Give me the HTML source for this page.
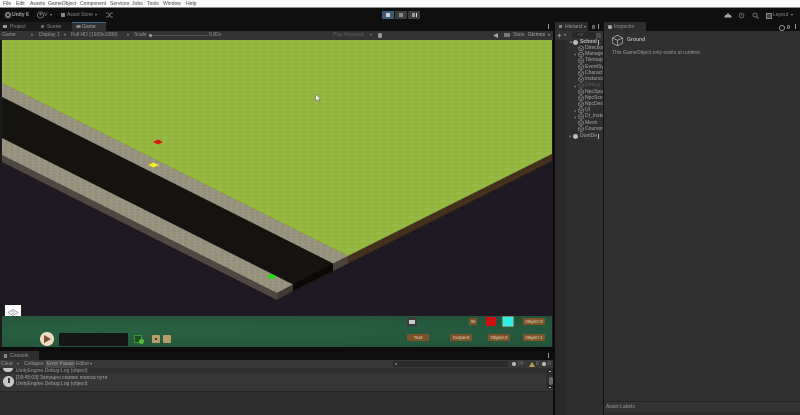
<!DOCTYPE html>
<html><head><meta charset="utf-8">
<style>
html,body{margin:0;padding:0;background:#0f0f0f}
#r{position:relative;width:800px;height:415px;overflow:hidden;background:#0f0f0f;font-family:"Liberation Sans","Noto Sans CJK JP",sans-serif;color:#b4b4b4;font-size:5.05px;line-height:7px;filter:blur(.35px)}
#r div,#r span.t{position:absolute;white-space:nowrap}
.b{position:absolute}
svg{position:absolute;overflow:visible}
.btn{background:#7d5428;color:#e6d8c0;text-align:center;border-radius:1px;font-size:4.6px;line-height:7px}
</style></head><body>
<div id="r">
<!-- menu -->
<div style="left:0;top:0;width:800px;height:8px;background:#fbfbfb"></div>
<div style="left:0;top:7px;width:800px;height:1px;background:#8a8a8a"></div>
<div style="left:3px;top:.5px;color:#444">File</div>
<div style="left:16px;top:.5px;color:#444">Edit</div>
<div style="left:30px;top:.5px;color:#444">Assets</div>
<div style="left:48px;top:.5px;color:#444">GameObject</div>
<div style="left:80px;top:.5px;color:#444">Component</div>
<div style="left:110px;top:.5px;color:#444">Services</div>
<div style="left:132px;top:.5px;color:#444">Jobs</div>
<div style="left:147px;top:.5px;color:#444">Tools</div>
<div style="left:163px;top:.5px;color:#444">Window</div>
<div style="left:186px;top:.5px;color:#444">Help</div>
<!-- toolbar -->
<svg style="left:4px;top:11px" width="8" height="8" viewBox="0 0 8 8"><circle cx="4" cy="4" r="3.2" fill="#777"/><circle cx="4" cy="4" r="1.2" fill="#222"/></svg>
<div style="left:12px;top:11.5px;font-weight:bold;color:#a8a8a8">Unity 6</div>
<svg style="left:37px;top:11px" width="7" height="8" viewBox="0 0 7 8"><circle cx="3.5" cy="4" r="3" fill="none" stroke="#888" stroke-width=".8"/><circle cx="3.5" cy="3.3" r="1" fill="#888"/></svg>
<div style="left:44px;top:11.5px;color:#999">V</div>
<div style="left:50px;top:14px;width:0;height:0;border:1.5px solid transparent;border-top:2px solid #999"></div>
<div style="left:61px;top:13px;width:4px;height:4px;background:#888"></div>
<div style="left:67px;top:11.5px;color:#8c8c8c">Asset Store</div>
<div style="left:95px;top:14px;width:0;height:0;border:1.5px solid transparent;border-top:2px solid #999"></div>
<svg style="left:106px;top:12px" width="7" height="6" viewBox="0 0 7 6"><path d="M0 1h2l3 4h2M0 5h2l3-4h2" stroke="#888" stroke-width=".7" fill="none"/></svg>
<div style="left:382px;top:11px;width:12px;height:8px;background:#3d5a78;border-radius:1px 0 0 1px"></div>
<div style="left:386px;top:13px;width:4px;height:4px;background:#d0d0d0"></div>
<div style="left:395px;top:11px;width:12px;height:8px;background:#3c3c3c"></div>
<div style="left:399px;top:13px;width:4px;height:4px;background:#8a8a8a"></div>
<div style="left:408px;top:11px;width:12px;height:8px;background:#3c3c3c;border-radius:0 1px 1px 0"></div>
<div style="left:412px;top:13px;width:3px;height:4px;background:#9a9a9a"></div>
<div style="left:415.5px;top:13px;width:1px;height:4px;background:#ddd"></div>
<svg style="left:724px;top:12px" width="8" height="6" viewBox="0 0 8 6"><path d="M0 5.5 1.5 3 3 2.5 4 .5 5 2.5 6.5 3 8 5.5z" fill="#aaa"/></svg>
<svg style="left:738px;top:12px" width="7" height="7" viewBox="0 0 7 7"><circle cx="3.5" cy="3.5" r="2.4" fill="none" stroke="#777" stroke-width=".8"/><path d="M3.5 2v1.7l1 .6" stroke="#777" stroke-width=".6" fill="none"/></svg>
<svg style="left:752px;top:12px" width="7" height="7" viewBox="0 0 7 7"><circle cx="3" cy="3" r="2" fill="none" stroke="#888" stroke-width=".8"/><path d="M4.5 4.5 6.5 6.5" stroke="#888" stroke-width=".9"/></svg>
<div style="left:766px;top:12.5px;width:4px;height:4px;border:.7px solid #888;background:#444"></div>
<div style="left:773px;top:11.5px;color:#8c8c8c">Layout</div>
<div style="left:791px;top:14px;width:0;height:0;border:1.5px solid transparent;border-top:2px solid #999"></div>

<!-- tabs -->
<div style="left:0;top:22px;width:72px;height:9px;background:#1c1c1c"></div>
<div style="left:3px;top:25px;width:4px;height:3px;background:#9a9a9a"></div>
<div style="left:10px;top:23.5px;color:#8a8a8a">Project</div>
<div style="left:41px;top:25px;width:3px;height:3px;background:#777;border-radius:50%"></div>
<div style="left:47px;top:23.5px;color:#8a8a8a">Scene</div>
<div style="left:72px;top:22px;width:34px;height:9px;background:#2f3133;border-top:.7px solid #3e6a8c;box-sizing:border-box"></div>
<div style="left:76px;top:25px;width:5px;height:3px;background:#8c8c8c;border-radius:50%"></div>
<div style="left:82px;top:23.5px;color:#a4a4a4">Game</div>
<div style="left:548px;top:24px;width:1px;height:5px;background:#999"></div>
<!-- game toolbar -->
<div style="left:0;top:31px;width:553px;height:9px;background:#333"></div>
<div style="left:2px;top:32px;color:#999">Game</div>
<div style="left:31px;top:34px;border:1.5px solid transparent;border-top:2px solid #999"></div>
<div style="left:39px;top:32px;color:#999">Display 1</div>
<div style="left:64px;top:34px;border:1.5px solid transparent;border-top:2px solid #999"></div>
<div style="left:71px;top:32px;color:#999">Full HD (1920x1080)</div>
<div style="left:127px;top:34px;border:1.5px solid transparent;border-top:2px solid #999"></div>
<div style="left:134px;top:32px;color:#999">Scale</div>
<div style="left:150px;top:35px;width:58px;height:1px;background:#555"></div>
<div style="left:149px;top:33.5px;width:3px;height:3px;border-radius:50%;background:#999"></div>
<div style="left:209px;top:32px;color:#999">0.82x</div>
<div style="left:333px;top:32px;color:#666">Play Focused</div>
<div style="left:370px;top:34px;border:1.5px solid transparent;border-top:2px solid #777"></div>
<div style="left:378px;top:32.5px;width:4px;height:5px;background:#999;border-radius:1.5px"></div>
<svg style="left:494px;top:33px" width="5" height="5" viewBox="0 0 5 5"><path d="M0 1.5h1.5L4 0v5L1.5 3.5H0z" fill="#aaa"/></svg>
<div style="left:504px;top:33px;width:6px;height:4px;background:#777"></div>
<div style="left:513px;top:32px;color:#999">Stats</div>
<div style="left:528px;top:32px;color:#aaa">Gizmos</div>
<div style="left:548px;top:34px;border:1.5px solid transparent;border-top:2px solid #aaa"></div>

<!-- game view -->
<svg style="left:0;top:40px" width="553" height="307" viewBox="0 40 553 307">
<defs>
<pattern id="g" width="8" height="4" patternUnits="userSpaceOnUse"><rect width="8" height="4" fill="#92b53f"/><path d="M0 2 4 0 8 2 4 4z" fill="#98ba42"/><path d="M0 2 4 4M4 4 8 2" stroke="#8cae3b" stroke-width=".4" fill="none"/></pattern>
<pattern id="s" width="6" height="3" patternUnits="userSpaceOnUse"><rect width="6" height="3" fill="#938e79"/><path d="M0 1.5 3 0 6 1.5 3 3z" fill="#9b9682"/></pattern>
</defs>
<rect x="0" y="40" width="553" height="307" fill="#1e1922"/>
<polygon points="2,40 552,40 552,154 348,256 2,83" fill="url(#g)"/>
<polygon points="2,83 348,256 333,263.5 2,97" fill="url(#s)"/>
<polygon points="552,154 348,256 348,263.5 552,161" fill="#43301f"/>
<polygon points="333,263.5 348,256 348,263.5 333,271" fill="#4c443a"/>
<polygon points="2,97 333,263.5 293,284.5 2,138" fill="#15130f"/>
<polygon points="293,284.5 333,263.5 333,271 293,291" fill="#0a0907"/>
<polygon points="2,138 293,284.5 277,293 2,155" fill="url(#s)"/>
<polygon points="2,155 277,293 277,300 2,162" fill="#4f4842"/>
<polygon points="277,293 293,284.5 293,291 277,300" fill="#3f3a34"/>
<polygon points="153,142 158,139.5 163,142 158,144.5" fill="#e01414"/>
<polygon points="148,165 153.5,162.5 159,165 153.5,167.5" fill="#f2ea1a"/>
<polygon points="266,276.5 272,274 277,276.5 272,279" fill="#22e012"/>
<rect x="0" y="40" width="1.5" height="307" fill="#1b1b1b"/>
<path d="M315.5 94 315.5 101 317.2 99.6 318.4 102 319.6 101.4 318.4 99.2 320.4 99z" fill="#fff" stroke="#333" stroke-width=".4"/>
</svg>

<!-- game UI -->
<div style="left:5px;top:305px;width:16px;height:14px;background:#fff"></div>
<svg style="left:8px;top:309px" width="10" height="7" viewBox="0 0 10 7"><path d="M0 3.5 5 .5 10 3.5 5 6.5z" fill="none" stroke="#888" stroke-width=".7"/><circle cx="5" cy="3.5" r="1.2" fill="none" stroke="#888" stroke-width=".5"/></svg>
<div style="left:2px;top:316px;width:550px;height:31px;background:#24573a;background-image:radial-gradient(ellipse at 30% 50%,#2a6141,#22533a)"></div>
<div style="left:40px;top:332px;width:14px;height:14px;border-radius:50%;background:#f0dcc0"></div>
<svg style="left:44px;top:335px" width="7" height="8" viewBox="0 0 7 8"><path d="M0 0 7 4 0 8z" fill="#7a5230"/></svg>
<div style="left:59px;top:333px;width:69px;height:13px;background:#151515;border-radius:1px"></div>
<div style="left:134px;top:335px;width:8px;height:8px;border:1px solid #3a9a2a;box-sizing:border-box;background:#1f4a28"></div>
<div style="left:139px;top:339px;width:5px;height:5px;background:#55c035;border-radius:50%"></div>
<div style="left:152px;top:335px;width:8px;height:8px;background:#b79d6a;border-radius:1px"></div>
<div style="left:155px;top:338px;width:2px;height:2px;background:#433"></div>
<div style="left:163px;top:335px;width:8px;height:8px;background:#b79d6a;border-radius:1px"></div>

<div style="left:407px;top:317px;width:10px;height:9px;background:#3b3b3b"></div>
<div style="left:409px;top:319.5px;width:6px;height:4px;background:#c9c9c9"></div>
<div class="btn" style="left:469px;top:318px;width:8px;height:7px">W</div>
<div style="left:486px;top:317px;width:10px;height:9px;background:#cf1010"></div>
<div style="left:503px;top:317px;width:10px;height:9px;background:#2ff0e8;box-shadow:0 0 0 .5px #d8d0a0"></div>
<div class="btn" style="left:523px;top:317.5px;width:22px;height:7px">Object-3</div>
<div class="btn" style="left:407px;top:333.5px;width:22px;height:7px">Text</div>
<div class="btn" style="left:450px;top:333.5px;width:22px;height:7px">Carpent</div>
<div class="btn" style="left:488px;top:333.5px;width:22px;height:7px">Object-2</div>
<div class="btn" style="left:523px;top:333.5px;width:22px;height:7px">Object-1</div>

<!-- console -->
<div style="left:0;top:347px;width:553px;height:4px;background:#0c0c0c"></div>
<div style="left:0;top:351px;width:553px;height:9px;background:#0f0f0f"></div>
<div style="left:0;top:351px;width:39px;height:9px;background:#2e2e2e"></div>
<div style="left:4px;top:353.5px;width:3px;height:4px;background:#888"></div>
<div style="left:10px;top:352.5px;color:#999">Console</div>
<div style="left:548px;top:353px;width:1px;height:5px;background:#999"></div>
<div style="left:0;top:360px;width:553px;height:8px;background:#383838"></div>
<div style="left:1px;top:360.5px;color:#999">Clear</div>
<div style="left:17px;top:363px;border:1.5px solid transparent;border-top:2px solid #999"></div>
<div style="left:24px;top:360.5px;color:#999">Collapse</div>
<div style="left:45px;top:360px;width:30px;height:8px;background:#4a4a4a"></div>
<div style="left:47px;top:360.5px;color:#aaa">Error Pause</div>
<div style="left:76px;top:360.5px;color:#999">Editor</div>
<div style="left:90px;top:363px;border:1.5px solid transparent;border-top:2px solid #999"></div>
<div style="left:393px;top:361px;width:115px;height:6px;background:#2a2a2a;border-radius:1px"></div>
<div style="left:395px;top:362.5px;width:2px;height:2px;background:#888;border-radius:50%"></div>
<div style="left:512px;top:362px;width:4px;height:4px;background:#bbb;border-radius:50%"></div>
<div style="left:518px;top:360.5px;color:#777">99</div>
<svg style="left:529px;top:361.5px" width="6" height="5" viewBox="0 0 6 5"><path d="M3 0 6 5H0z" fill="#b8a050"/></svg>
<div style="left:536px;top:360.5px;color:#777">8</div>
<div style="left:542px;top:362px;width:4px;height:4px;background:#bbb;border-radius:50%"></div>
<div style="left:548px;top:360.5px;color:#777">0</div>
<div style="left:0;top:368px;width:553px;height:47px;background:#2e2e2e"></div>
<div style="left:0;top:368px;width:553px;height:6px;background:#2f2f2f"></div>
<div style="left:3px;top:368px;width:10px;height:4px;background:#c8c8c8;border-radius:0 0 5px 5px"></div>
<div style="left:16px;top:368px;color:#999;height:6px;overflow:hidden;line-height:6px">UnityEngine.Debug:Log (object)</div>
<div style="left:0;top:374px;width:553px;height:17px;background:#363636"></div>
<div style="left:3px;top:376px;width:11px;height:11px;background:#c8c8c8;border-radius:50%"></div>
<div style="left:8px;top:378px;width:1.5px;height:5px;background:#3a3a3a"></div>
<div style="left:16px;top:374.5px;color:#a4a4a4">[19:45:03] Запущен сервис поиска пути</div>
<div style="left:16px;top:380.5px;color:#a4a4a4">UnityEngine.Debug:Log (object)</div>
<div style="left:0;top:391px;width:553px;height:1px;background:#262626"></div>
<div style="left:546px;top:368px;width:7px;height:21px;background:#2b2b2b"></div>
<div style="left:549px;top:370.5px;width:2px;height:1px;background:#bbb"></div>
<div style="left:548.5px;top:377px;width:4px;height:8px;background:#696969;border-radius:2px"></div>
<div style="left:549px;top:387px;width:2px;height:1px;background:#bbb"></div>
<!-- separators -->
<div style="left:553px;top:22px;width:2px;height:393px;background:#0c0c0c"></div>

<!-- hierarchy -->
<div style="left:555px;top:22px;width:49px;height:9px;background:#0f0f0f"></div>
<div style="left:555px;top:22px;width:33px;height:9px;background:#2d2d2d"></div>
<div style="left:559px;top:25px;width:3px;height:3px;background:#888"></div>
<div style="left:565px;top:23.5px;color:#999;width:20px;overflow:hidden">Hierarcl</div>
<div style="left:584px;top:25.5px;border:1.5px solid transparent;border-top:2px solid #aaa"></div>
<div style="left:592px;top:24.5px;width:3px;height:4px;border:.6px solid #888;border-radius:50%;box-sizing:border-box"></div>
<div style="left:598px;top:24px;width:1px;height:5px;background:#999"></div>
<div style="left:555px;top:31px;width:49px;height:9px;background:#333"></div>
<div style="left:557px;top:31.5px;color:#bbb;font-size:8px">+</div>
<div style="left:564px;top:34px;border:1.5px solid transparent;border-top:2px solid #aaa"></div>
<div style="left:572px;top:32px;width:24px;height:6px;background:#282828;border-radius:2px;color:#666;font-size:4.5px;line-height:6px;text-indent:6px">All</div>
<div style="left:596px;top:32.5px;width:5px;height:5px;background:#4c4c4c"></div>
<div style="left:555px;top:40px;width:12px;height:375px;background:#292929"></div>
<div style="left:567px;top:40px;width:37px;height:375px;background:#2e2e2e"></div>

<svg style="left:555px;top:40px;width:49px;height:100px;overflow:hidden" width="49" height="100" viewBox="555 40 49 100">
<defs><g id="c"><path d="M0 1.5 2.5 0 5 1.5V4L2.5 5.5 0 4zM0 1.5 2.5 3 5 1.5M2.5 3V5.5" fill="none" stroke="#a2a2a2" stroke-width=".5"/></g></defs>
<use href="#c" x="578.5" y="45.7"/><use href="#c" x="578.5" y="51.9"/><use href="#c" x="578.5" y="58.1"/><use href="#c" x="578.5" y="64.3"/><use href="#c" x="578.5" y="70.5"/><use href="#c" x="578.5" y="76.7"/><use href="#c" x="578.5" y="83" opacity=".45"/><use href="#c" x="578.5" y="89.2"/><use href="#c" x="578.5" y="95.4"/><use href="#c" x="578.5" y="101.6"/><use href="#c" x="578.5" y="107.8"/><use href="#c" x="578.5" y="114"/><use href="#c" x="578.5" y="120.2"/><use href="#c" x="578.5" y="126.4"/>
<circle cx="575.5" cy="42.5" r="2.5" fill="#bdbdbd"/><circle cx="575.5" cy="136.5" r="2.5" fill="#bdbdbd"/>
<path d="M569.5 41.5h3l-1.5 2.2zM574.7 53v3l1.5-1.5zM574.7 85v3l1.5-1.5zM574.7 109.5v3l1.5-1.5zM574.7 116v3l1.5-1.5zM569.7 135v3l1.5-1.5z" fill="#888"/>
</svg>
<div style="left:580px;top:38.5px;color:#c0c0c0;font-weight:bold">School</div>
<div style="left:598px;top:40px;width:.8px;height:5px;background:#bbb"></div>
<div style="left:585px;top:45px;color:#a8a8a8;width:19px;overflow:hidden">Direction</div>
<div style="left:585px;top:51.2px;color:#a8a8a8;width:19px;overflow:hidden">Manager</div>
<div style="left:585px;top:57.4px;color:#a8a8a8;width:19px;overflow:hidden">Tilemap</div>
<div style="left:585px;top:63.6px;color:#a8a8a8;width:19px;overflow:hidden">EventSy</div>
<div style="left:585px;top:69.8px;color:#a8a8a8;width:19px;overflow:hidden">Charact</div>
<div style="left:585px;top:76px;color:#a8a8a8;width:19px;overflow:hidden">Instance</div>
<div style="left:585px;top:82.4px;color:#5e5e5e;width:19px;overflow:hidden">Debug</div>
<div style="left:585px;top:88.6px;color:#a8a8a8;width:19px;overflow:hidden">NpcSpa</div>
<div style="left:585px;top:94.8px;color:#a8a8a8;width:19px;overflow:hidden">NpcSce</div>
<div style="left:585px;top:101px;color:#a8a8a8;width:19px;overflow:hidden">NpcDes</div>
<div style="left:585px;top:107.2px;color:#a8a8a8;width:19px;overflow:hidden">UI</div>
<div style="left:585px;top:113.4px;color:#a8a8a8;width:19px;overflow:hidden">DI_Insta</div>
<div style="left:585px;top:119.6px;color:#a8a8a8;width:19px;overflow:hidden">Mesh</div>
<div style="left:585px;top:125.8px;color:#a8a8a8;width:19px;overflow:hidden">Coursor</div>
<div style="left:580px;top:133px;color:#a8a8a8">DontDe</div>
<div style="left:598px;top:134px;width:.8px;height:5px;background:#bbb"></div>

<!-- inspector -->
<div style="left:604px;top:22px;width:196px;height:9px;background:#0f0f0f"></div>
<div style="left:603px;top:22px;width:1px;height:393px;background:#111"></div>
<div style="left:604px;top:22px;width:42px;height:9px;background:#2d2d2d"></div>
<div style="left:608px;top:25px;width:3.5px;height:3.5px;background:#aaa;border-radius:50%"></div>
<div style="left:614px;top:23.5px;color:#8f8f8f">Inspector</div>
<div style="left:779px;top:25px;width:4px;height:4px;border:.7px solid #999;border-radius:50%"></div>
<div style="left:787px;top:24.5px;width:3px;height:4px;border:.6px solid #888;border-radius:50%;box-sizing:border-box"></div>
<div style="left:795px;top:24px;width:1px;height:5px;background:#999"></div>
<div style="left:604px;top:31px;width:196px;height:384px;background:#303030"></div>
<svg style="left:612px;top:35px" width="11" height="11" viewBox="0 0 11 11"><path d="M.5 2.8 5.5.3 10.5 2.8V8.2L5.5 10.7.5 8.2zM.5 2.8 5.5 5.3 10.5 2.8M5.5 5.3V10.7" fill="none" stroke="#b4b4b4" stroke-width=".7"/></svg>
<div style="left:627px;top:37px;color:#b0b0b0;font-weight:bold">Ground</div>
<div style="left:612px;top:50px;color:#989898">This GameObject only exists at runtime.</div>
<div style="left:604px;top:401px;width:196px;height:1px;background:#242424"></div>
<div style="left:604px;top:402px;width:196px;height:10px;background:#333"></div>
<div style="left:606px;top:403.5px;color:#999">Asset Labels</div>
<div style="left:604px;top:412px;width:196px;height:3px;background:#2c2c2c"></div>
</div>
</body></html>
